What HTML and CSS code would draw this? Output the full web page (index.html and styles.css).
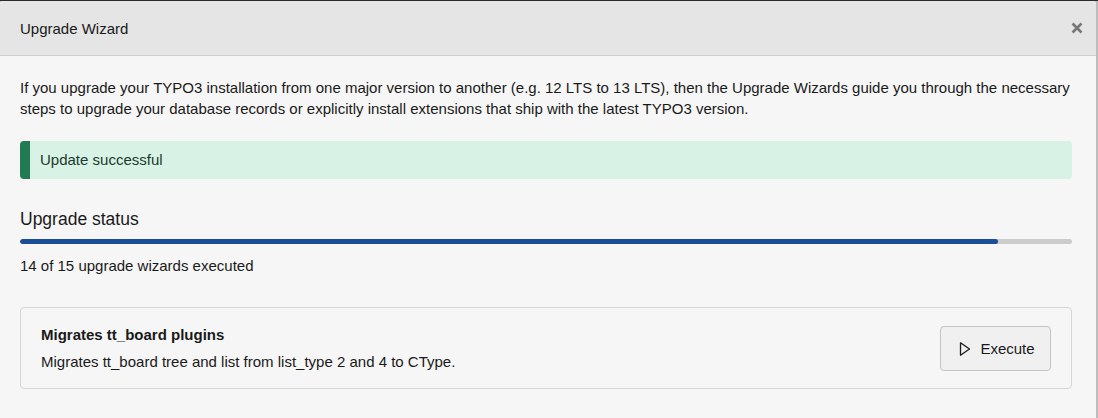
FILE: index.html
```html
<!DOCTYPE html>
<html>
<head>
<meta charset="utf-8">
<link rel="stylesheet" href="styles.css">
</head>
<body>
<div class="modal">
  <div class="modal-header">
    <h4 class="modal-title">Upgrade Wizard</h4>
    <svg class="close" width="12" height="12" viewBox="0 0 12 12"><path d="M1.5 1.5 L10.5 10.5 M10.5 1.5 L1.5 10.5" stroke="#777" stroke-width="2.6" stroke-linecap="butt"/></svg>
  </div>
  <div class="modal-body">
    <p class="intro">If you upgrade your TYPO3 installation from one major version to another (e.g. 12 LTS to 13 LTS), then the Upgrade Wizards guide you through the necessary steps to upgrade your database records or explicitly install extensions that ship with the latest TYPO3 version.</p>
    <div class="alert">Update successful</div>
    <h3 class="status-title">Upgrade status</h3>
    <div class="progress"><div class="progress-bar" style="width: 93%"></div></div>
    <p class="status-text">14 of 15 upgrade wizards executed</p>
    <div class="card">
      <div class="card-text">
        <div class="card-title">Migrates tt_board plugins</div>
        <div class="card-desc">Migrates tt_board tree and list from list_type 2 and 4 to CType.</div>
      </div>
      <button class="btn">
        <svg width="16" height="16" viewBox="0 0 16 16"><path d="M3.5 1.8 L12.5 8 L3.5 14.2 Z" fill="none" stroke="#1a1a1a" stroke-width="1.3" stroke-linejoin="round"/></svg>
        <span>Execute</span>
      </button>
    </div>
  </div>
</div>
</body>
</html>
```
FILE: styles.css
```css
html, body {
  margin: 0;
  padding: 0;
}
body {
  background: #bdbdbd;
  font-family: "Liberation Sans", Arial, sans-serif;
  color: #1a1a1a;
  width: 1098px;
  height: 418px;
  overflow: hidden;
  border-top: 1px solid #2b2b2b;
  box-sizing: border-box;
}
.modal {
  width: 1096px;
  height: 417px;
  background: #f6f6f6;
  border-radius: 3px 3px 0 0;
  overflow: hidden;
}
.modal-header {
  display: flex;
  align-items: center;
  justify-content: space-between;
  height: 54px;
  padding: 0 13px 0 20px;
  background: #e5e5e5;
  border-bottom: 1px solid #cfcfcf;
}
.modal-title {
  margin: 0;
  font-size: 15px;
  font-weight: normal;
  color: #1a1a1a;
}
.close {
  display: block;
}
.modal-body {
  padding: 21px 24px 0 20px;
}
.intro {
  margin: 0;
  font-size: 15px;
  line-height: 21px;
}
.alert {
  margin-top: 22px;
  height: 38px;
  display: flex;
  align-items: center;
  padding-left: 10px;
  padding-bottom: 1px;
  box-sizing: border-box;
  background: #d8f2e6;
  border-left: 10px solid #217a54;
  border-radius: 4px;
  font-size: 15px;
  color: #1c3a2c;
}
.status-title {
  margin: 29px 0 0;
  font-size: 17.5px;
  font-weight: normal;
  line-height: 22px;
}
.progress {
  margin-top: 9px;
  height: 5px;
  background: #cccccc;
  border-radius: 3px;
  overflow: hidden;
}
.progress-bar {
  height: 100%;
  background: #1a4e99;
  border-radius: 3px;
}
.status-text {
  margin: 12px 0 0;
  font-size: 15px;
  line-height: 20px;
}
.card {
  margin-top: 31px;
  height: 82px;
  box-sizing: border-box;
  display: flex;
  align-items: center;
  justify-content: space-between;
  padding: 2px 20px 1px 20px;
  border: 1px solid #d6d6d6;
  border-radius: 4px;
  background: #f6f6f6;
}
.card-title {
  font-size: 15px;
  font-weight: bold;
  line-height: 20px;
}
.card-desc {
  margin-top: 7px;
  font-size: 15px;
  line-height: 20px;
}
.btn {
  display: flex;
  align-items: center;
  gap: 7px;
  height: 45px;
  width: 111px;
  justify-content: center;
  background: #f0f0f0;
  border: 1px solid #c4c4c4;
  border-radius: 4px;
  font-family: "Liberation Sans", Arial, sans-serif;
  font-size: 15px;
  color: #1a1a1a;
  padding: 0 0 0 1px;
}
```
